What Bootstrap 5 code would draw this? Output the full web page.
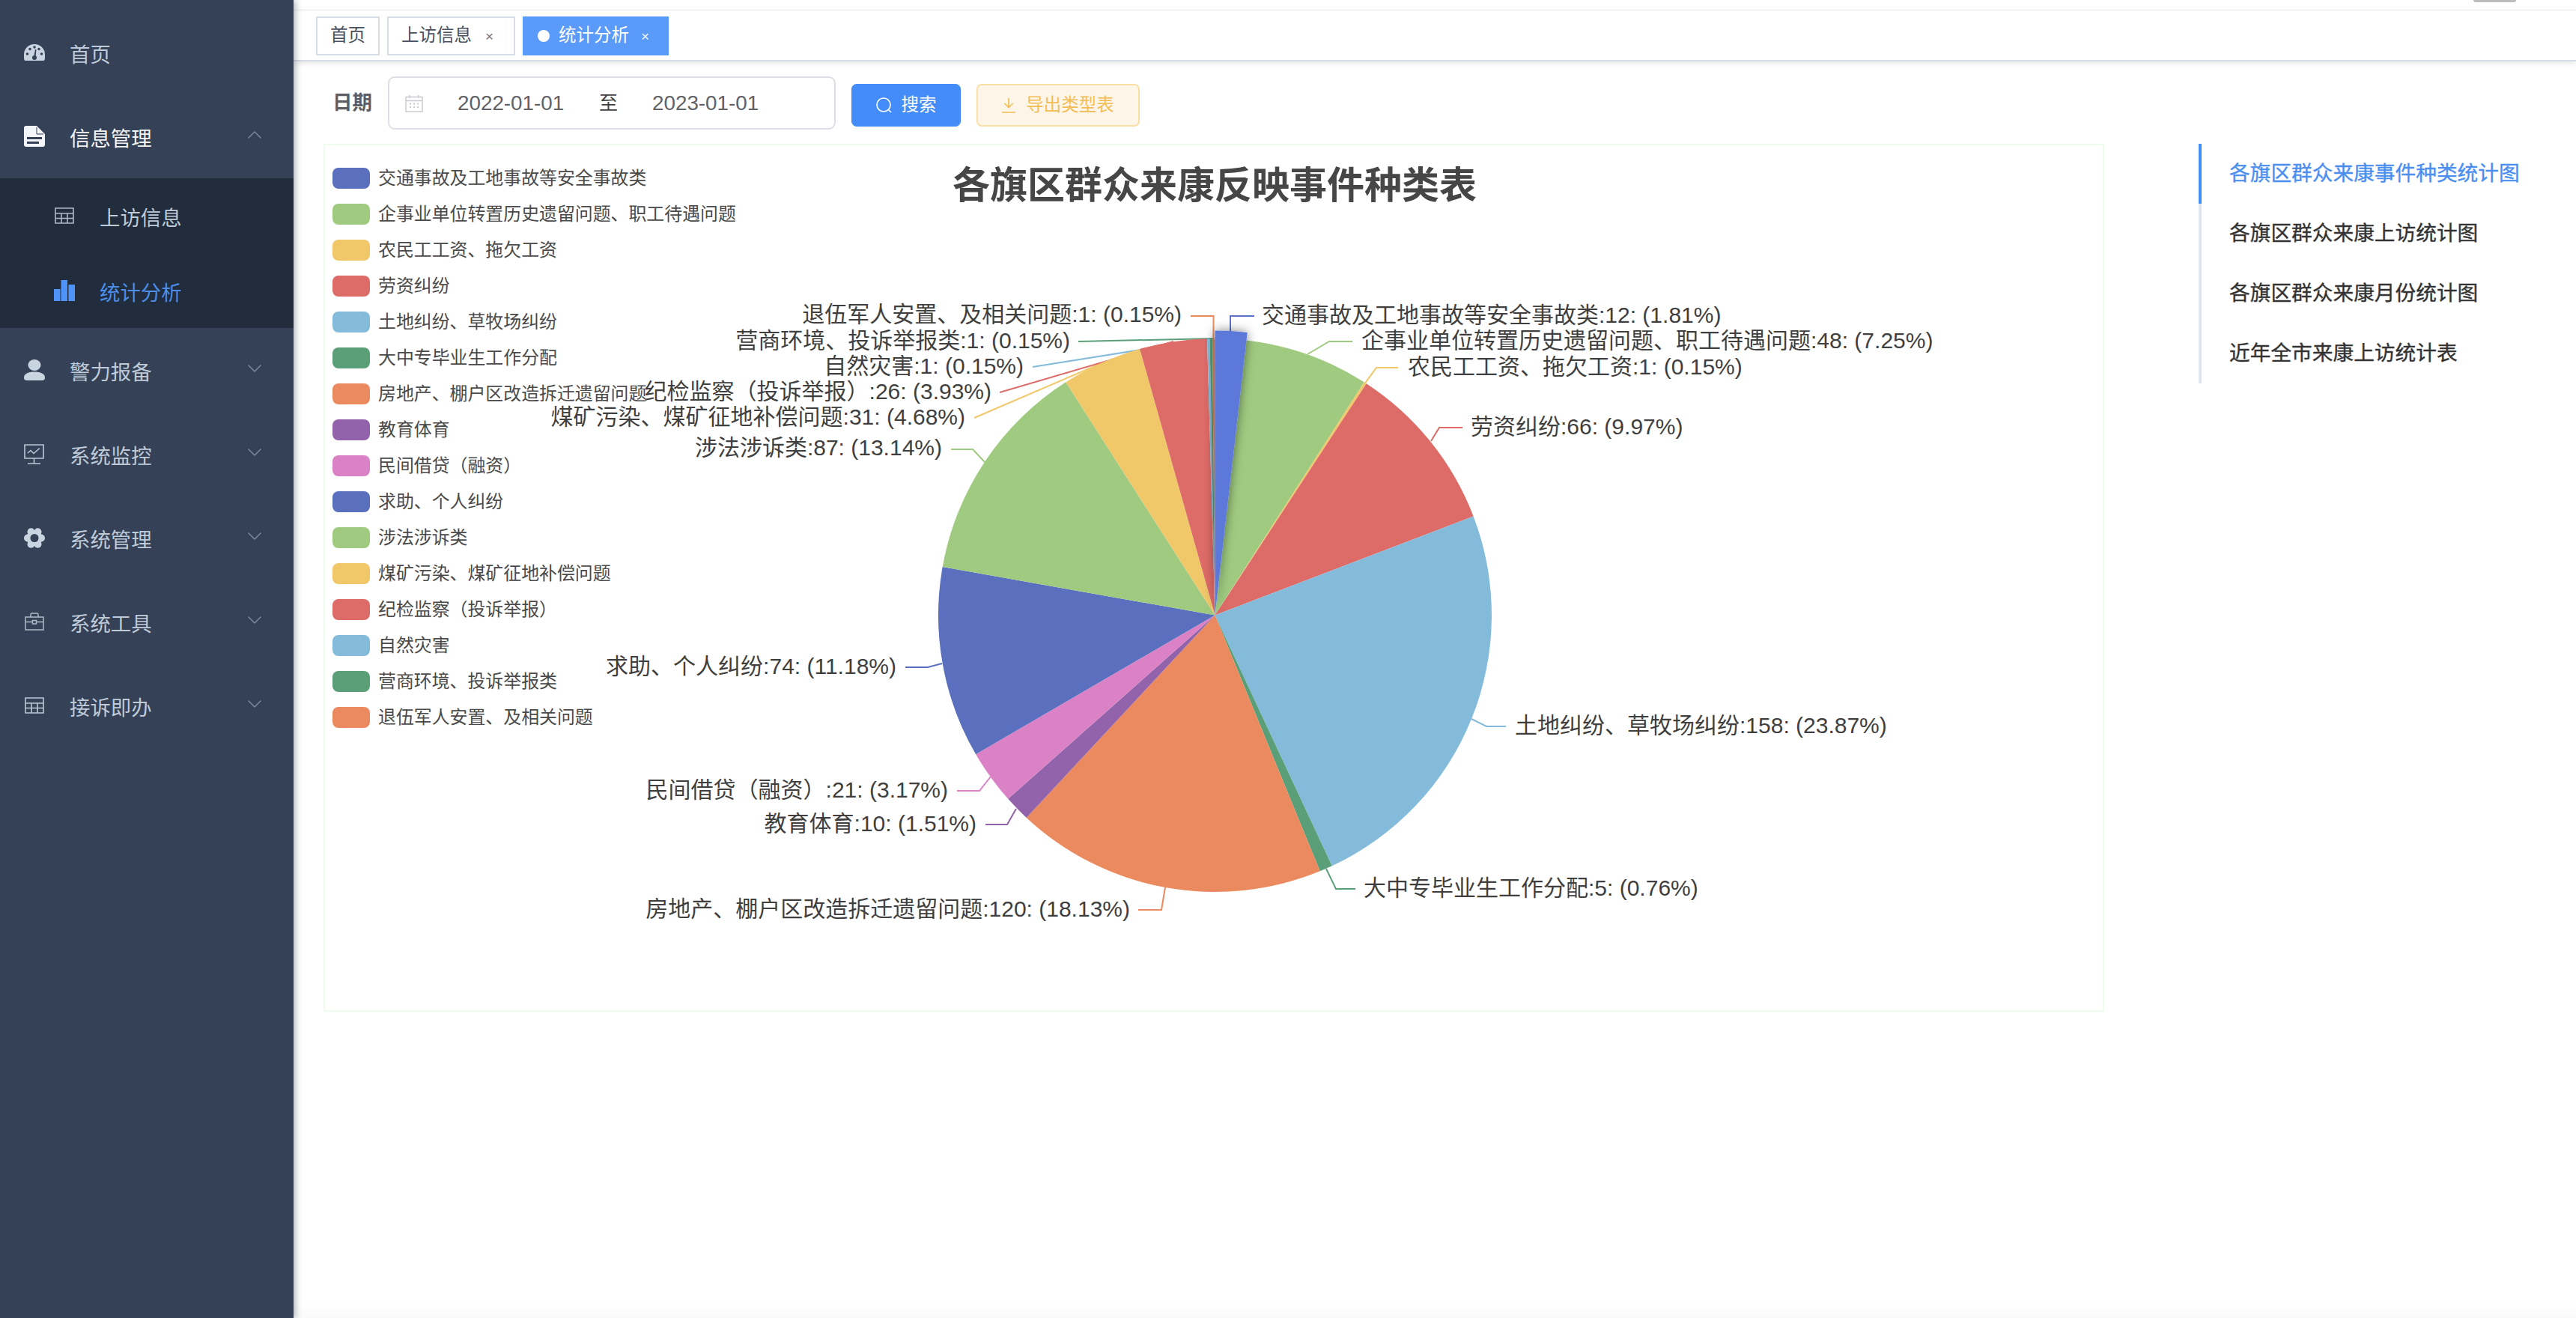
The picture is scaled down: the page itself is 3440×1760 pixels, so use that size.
<!DOCTYPE html>
<html lang="zh-CN">
<head>
<meta charset="utf-8">
<title>统计分析</title>
<link rel="stylesheet" href="https://cdn.jsdelivr.net/npm/bootstrap@5.3.0/dist/css/bootstrap.min.css">
<style>
html,body{height:100%;margin:0;background:#fff;overflow:hidden}
body{font-family:"Liberation Sans","Noto Sans CJK SC",sans-serif;color:#404040}
.app-shell{width:3440px;height:1760px}
/* sidebar */
.side-rail{width:392px;flex:0 0 392px;background:#354156;padding-top:14px;box-shadow:2px 0 9px rgba(0,21,41,.35);z-index:3}
.side-rail .nav-link{height:112px;padding:7px 43px 0 32px;color:#bfcbd9;font-size:27.4px;display:flex;align-items:center}
.side-rail .nav-link svg.mi{width:28px;margin-right:33px;flex:0 0 28px;margin-top:-7px;fill:#c8d4e0;color:#c8d4e0}
.side-rail .nav-link.is-open{color:#f4f4f5}
.side-rail .nav-link.is-open svg.mi{fill:#f4f5f8}
.side-rail .chev{width:18px;height:10px;margin-left:auto;margin-top:-11px;color:#808b9b}
.sub-pane{background:#212c3c}
.sub-pane .nav-link{height:100px;padding:7px 0 0 72px}
.sub-pane .nav-link svg.mi{color:#aeb8c6}
.sub-pane .nav-link.is-active{color:#4c8ee8}
.sub-pane .nav-link.is-active svg.mi{fill:#4f93f8}
/* top */
.work-area{min-width:0;box-shadow:inset 0 -26px 26px -26px rgba(0,0,0,.05)}
.top-strip{height:14px;border-bottom:1px solid #f1f1f3;padding-right:80px}
.avatar-foot{width:57px;height:3px;background:#bdbdbd;border-radius:0 0 6px 6px}
.tag-bar{height:68px;padding:8px 0 0 30px;gap:10px;background:#fff;border-bottom:2px solid #d8dce5;box-shadow:0 2px 8px rgba(0,0,0,.12);z-index:2}
.tag-chip{height:52px;border:2px solid #d8dce5;font-size:23.5px;color:#495060;padding:0 17px;background:#fff}
.tag-chip .cls{font-size:19px;margin:0 10px 0 18px;color:#777;line-height:1}
.tag-chip.on{background:#5a9af8;border-color:#5a9af8;color:#fff;padding:0 24px 0 18px}
.tag-chip.on .cls{color:#f2f6ff;margin:0 0 0 16px}
.tag-chip .dot-on{width:16px;height:16px;border-radius:50%;background:#fff;margin-right:12px}
/* filter */
.filter-row{padding:20px 0 0 52px;gap:21px}
.filter-label{font-size:26.5px;font-weight:700;color:#5c5e62;width:53px}
.range-box{width:598px;height:71px;border:2px solid #dcdfe6;border-radius:9px;padding-left:21px;font-size:27.8px;color:#606266}
.range-box .rb-val{width:143px;margin-left:46px}
.range-box .rb-to{width:25px;margin-left:46px;color:#404040;font-size:25px}
.act-btn{height:57px;border-radius:7px;font-size:23.5px;padding:0;display:flex;align-items:center;justify-content:center;margin-top:6px}
.act-search{width:146px;background:#448cf7;border-color:#448cf7;color:#fff;gap:13px}
.act-export{width:218px;background:#fdf6e8;border:2px solid #f9dfa6;color:#f3bd55;gap:14px}
/* chart */
.chart-row{padding:19px 0 0 40px}
.chart-canvas{width:2378px;height:1159px;box-shadow:inset 0 0 0 2px #effbef;flex:0 0 2378px}
.chart-canvas svg{display:block}
.chart-canvas text{font-family:"Liberation Sans","Noto Sans CJK SC",sans-serif}
.lbl{font-size:30px;fill:#3f3f3f;dominant-baseline:central}
.ttl{font-size:50px;font-weight:700;fill:#464646;dominant-baseline:central}
.legend-list{position:absolute;left:12px;top:32px;gap:20px;font-size:23.9px;color:#4a4a4a}
.legend-row{height:28px;line-height:28px;white-space:nowrap}
.legend-sw{width:50px;height:28px;border-radius:8px;margin-right:11px;flex:0 0 50px}
/* anchor */
.anchor-list{margin-left:126px;width:400px;height:320px;border-left:4px solid #e1e6ee}
.anchor-list .nav-link{height:80px;margin-left:-4px;border-left:4px solid transparent;padding:0 0 0 37px;display:flex;align-items:center;font-size:27.7px;font-weight:400;-webkit-text-stroke:.35px currentColor;color:#333;white-space:nowrap}
.anchor-list .nav-link.active{color:#4a8ff0;border-left-color:#448cf7}
</style>
</head>
<body>
<div class="app-shell d-flex">
  <aside class="side-rail">
    <nav class="nav flex-column">
      <a class="nav-link" href="#"><svg class="mi" viewBox="0 0 28 22" height="22"><path d="M2 22Q0 22 0 18V14A14 14 0 0 1 28 14V18Q28 22 26 22Z"/><g fill="#354156"><circle cx="4.5" cy="13" r="1.8"/><circle cx="8" cy="6.5" r="1.8"/><circle cx="14" cy="4" r="1.8"/><circle cx="23.5" cy="13" r="1.8"/><circle cx="20" cy="6.5" r="1.8"/><circle cx="14" cy="18" r="3"/></g><path d="M13 18 15 7 16.5 7.3 15.5 18Z" fill="#354156"/></svg>首页</a>
      <a class="nav-link is-open" href="#"><svg class="mi" viewBox="0 0 28 28" height="28"><path d="M3 0H17L28 11V25A3 3 0 0 1 25 28H3A3 3 0 0 1 0 25V3A3 3 0 0 1 3 0Z"/><path d="M17 2V11H26" fill="none" stroke="#354156" stroke-width="1"/><path d="M4 15H24V18H4ZM4 21H20V24H4Z" fill="#354156"/></svg>信息管理<svg class="chev" viewBox="0 0 18 10" fill="none" stroke="currentColor" stroke-width="1.4"><path d="M.5 9.500 9 1l8.500 8.500"/></svg></a>
      <div class="sub-pane">
        <a class="nav-link" href="#"><svg class="mi" viewBox="0 0 26 22" height="22" stroke="currentColor" stroke-width="1.6" style="fill:none"><path d="M1 1H25V21H1ZM1 8H25M1 14.500H25M9 8V21M17 8V21"/></svg>上访信息</a>
        <a class="nav-link is-active" href="#"><svg class="mi" viewBox="0 0 28 28" height="28"><path d="M0 12H8.500V28H0ZM9.500 0H18V28H9.500ZM19.500 6H28V28H19.500Z"/></svg>统计分析</a>
      </div>
      <a class="nav-link" href="#"><svg class="mi" viewBox="0 0 28 28" height="28"><ellipse cx="14" cy="7.500" rx="8.500" ry="7.500"/><path d="M0 24C0 19 6 16.500 14 16.500S28 19 28 24C28 27 26.500 28 24 28H4C1.500 28 0 27 0 24Z"/></svg>警力报备<svg class="chev" viewBox="0 0 18 10" fill="none" stroke="currentColor" stroke-width="1.400"><path d="M.5.500 9 9l8.500-8.500"/></svg></a>
      <a class="nav-link" href="#"><svg class="mi" viewBox="0 0 28 27" height="27" style="fill:none" stroke="#bcc8d6" stroke-width="1.600"><path d="M1 1H26V19H1ZM13.500 19V26M5 26H22"/><path d="M5 12 9 8.500 13 12.500 21 5.500" stroke-width="1.500"/></svg>系统监控<svg class="chev" viewBox="0 0 18 10" fill="none" stroke="currentColor" stroke-width="1.400"><path d="M.5.500 9 9l8.500-8.500"/></svg></a>
      <a class="nav-link" href="#"><svg class="mi" viewBox="0 0 28 27" height="27"><g><circle cx="14" cy="13.500" r="10.500"/><circle cx="23" cy="13.500" r="5"/><circle cx="5" cy="13.500" r="5"/><circle cx="18.500" cy="5.300" r="5"/><circle cx="9.500" cy="5.300" r="5"/><circle cx="18.500" cy="21.700" r="5"/><circle cx="9.500" cy="21.700" r="5"/></g><circle cx="14" cy="13.500" r="5.500" fill="#354156"/></svg>系统管理<svg class="chev" viewBox="0 0 18 10" fill="none" stroke="currentColor" stroke-width="1.400"><path d="M.5.500 9 9l8.500-8.500"/></svg></a>
      <a class="nav-link" href="#"><svg class="mi" viewBox="0 0 28 24" height="24" style="fill:none" stroke="#aeb9c8" stroke-width="1.500"><path d="M2 6H26V23H2ZM9 6V2.500A1.500 1.500 0 0 1 10.500 1H17.500A1.500 1.500 0 0 1 19 2.500V6M2 12.500H11.500M16.500 12.500H26"/><rect x="11.500" y="10.500" width="5" height="4.500"/></svg>系统工具<svg class="chev" viewBox="0 0 18 10" fill="none" stroke="currentColor" stroke-width="1.400"><path d="M.5.500 9 9l8.500-8.500"/></svg></a>
      <a class="nav-link" href="#"><svg class="mi" viewBox="0 0 28 22" height="22" style="fill:none" stroke="#bcc8d6" stroke-width="1.600"><path d="M2 1H26V21H2ZM2 8H26M2 14.500H26M10 8V21M18 8V21"/></svg>接诉即办<svg class="chev" viewBox="0 0 18 10" fill="none" stroke="currentColor" stroke-width="1.400"><path d="M.5.500 9 9l8.500-8.500"/></svg></a>
    </nav>
  </aside>

  <main class="work-area flex-grow-1 d-flex flex-column">
    <div class="top-strip d-flex justify-content-end flex-shrink-0"><div class="avatar-foot"></div></div>
    <div class="tag-bar d-flex flex-shrink-0">
      <a class="tag-chip d-flex align-items-center text-decoration-none" href="#">首页</a>
      <a class="tag-chip d-flex align-items-center text-decoration-none" href="#">上访信息<span class="cls">×</span></a>
      <a class="tag-chip on d-flex align-items-center text-decoration-none" href="#"><span class="dot-on"></span>统计分析<span class="cls">×</span></a>
    </div>

    <div class="filter-row d-flex align-items-center flex-shrink-0">
      <label class="filter-label">日期</label>
      <div class="range-box d-flex align-items-center">
        <svg width="24" height="24" viewBox="0 0 24 24" fill="none" stroke="#c9cbd0" stroke-width="1.500"><path d="M1 3.500H23V23H1ZM1 8.500H23M6 1V5M18 1V5"/><path d="M6 12.500H8M11 12.500H13M16 12.500H18M6 17H8M11 17H13M16 17H18" stroke-width="1.800"/></svg>
        <span class="rb-val">2022-01-01</span><span class="rb-to">至</span><span class="rb-val">2023-01-01</span>
      </div>
      <button type="button" class="btn btn-primary act-btn act-search"><svg width="21" height="21" viewBox="0 0 21 21" fill="none" stroke="#fff" stroke-width="1.600"><circle cx="10" cy="10" r="9"/><path d="M16.500 16.500 20 20"/></svg>搜索</button>
      <button type="button" class="btn act-btn act-export"><svg width="18" height="21" viewBox="0 0 18 21" fill="none" stroke="#f3bd55" stroke-width="1.700"><path d="M9 1V13M3.500 8 9 13.500 14.500 8M0 20H18"/></svg>导出类型表</button>
    </div>

    <div class="chart-row d-flex align-items-start flex-shrink-0">
      <div class="chart-canvas position-relative">
        <svg id="pie" width="2378" height="1159" viewBox="432 192 2378 1159">
          <text class="ttl" x="1622" y="248" text-anchor="middle">各旗区群众来康反映事件种类表</text>
          <g fill="none" stroke-width="2">
            <path stroke="#5b72c6" d="M1675 422H1643V444"/>
            <path stroke="#9fca80" d="M1806 456H1775L1746 473"/>
            <path stroke="#f0c769" d="M1867 491H1838L1822 513"/>
            <path stroke="#dd6b67" d="M1953 571H1922L1911 589"/>
            <path stroke="#84bbdb" d="M2011 970H1985L1965 960"/>
            <path stroke="#5a9f78" d="M1810 1187H1784L1771 1160"/>
            <path stroke="#ea8a5e" d="M1520 1215H1551L1556 1185"/>
            <path stroke="#9263ab" d="M1316 1101H1345L1357 1080"/>
            <path stroke="#da82c5" d="M1278 1056H1308L1323 1037"/>
            <path stroke="#5a70bf" d="M1209 891H1239L1258 886"/>
            <path stroke="#9fca80" d="M1270 600H1299L1315 617"/>
            <path stroke="#f0c769" d="M1301 558L1471 485"/>
            <path stroke="#dd6b67" d="M1335 524L1567 456"/>
            <path stroke="#84bbdb" d="M1379 490L1618 452"/>
            <path stroke="#5a9f78" d="M1440 456L1620 452"/>
            <path stroke="#ea8a5e" d="M1590 422H1620.500V453"/>
          </g>
          <g id="slices"></g>
          <g text-anchor="start" transform="translate(0,-2)">
            <text class="lbl" x="1685" y="422">交通事故及工地事故等安全事故类:12: (1.81%)</text>
            <text class="lbl" x="1818" y="456">企事业单位转置历史遗留问题、职工待遇问题:48: (7.25%)</text>
            <text class="lbl" x="1880" y="491">农民工工资、拖欠工资:1: (0.15%)</text>
            <text class="lbl" x="1964" y="571">劳资纠纷:66: (9.97%)</text>
            <text class="lbl" x="2023" y="970">土地纠纷、草牧场纠纷:158: (23.87%)</text>
            <text class="lbl" x="1821" y="1187">大中专毕业生工作分配:5: (0.76%)</text>
          </g>
          <g text-anchor="end" transform="translate(0,-2)">
            <text class="lbl" x="1509" y="1215">房地产、棚户区改造拆迁遗留问题:120: (18.13%)</text>
            <text class="lbl" x="1304" y="1101">教育体育:10: (1.51%)</text>
            <text class="lbl" x="1266" y="1056">民间借贷（融资）:21: (3.17%)</text>
            <text class="lbl" x="1197" y="891">求助、个人纠纷:74: (11.18%)</text>
            <text class="lbl" x="1258" y="599">涉法涉诉类:87: (13.14%)</text>
            <text class="lbl" x="1289" y="558">煤矿污染、煤矿征地补偿问题:31: (4.68%)</text>
            <text class="lbl" x="1324" y="524">纪检监察（投诉举报）:26: (3.93%)</text>
            <text class="lbl" x="1367" y="490">自然灾害:1: (0.15%)</text>
            <text class="lbl" x="1429" y="456">营商环境、投诉举报类:1: (0.15%)</text>
            <text class="lbl" x="1578" y="421">退伍军人安置、及相关问题:1: (0.15%)</text>
          </g>
          <defs><filter id="lift" x="-60%" y="-20%" width="220%" height="140%"><feDropShadow dx="0" dy="0" stdDeviation="7" flood-color="#000" flood-opacity=".5"/></filter></defs>
        </svg>
        <div class="legend-list d-flex flex-column" id="legend"></div>
      </div>
      <nav class="nav flex-column anchor-list flex-shrink-0">
        <a class="nav-link active" href="#">各旗区群众来康事件种类统计图</a>
        <a class="nav-link" href="#">各旗区群众来康上访统计图</a>
        <a class="nav-link" href="#">各旗区群众来康月份统计图</a>
        <a class="nav-link" href="#">近年全市来康上访统计表</a>
      </nav>
    </div>
  </main>
</div>
<script src="https://cdn.jsdelivr.net/npm/bootstrap@5.3.0/dist/js/bootstrap.bundle.min.js"></script>
<script>
(function(){
  var palette=['#5a70bf','#9fca80','#f0c769','#dd6b67','#84bbdb','#5a9f78','#ea8a5e','#9263ab','#da82c5'];
  var data=[['交通事故及工地事故等安全事故类',12],['企事业单位转置历史遗留问题、职工待遇问题',48],['农民工工资、拖欠工资',1],['劳资纠纷',66],['土地纠纷、草牧场纠纷',158],['大中专毕业生工作分配',5],['房地产、棚户区改造拆迁遗留问题',120],['教育体育',10],['民间借贷（融资）',21],['求助、个人纠纷',74],['涉法涉诉类',87],['煤矿污染、煤矿征地补偿问题',31],['纪检监察（投诉举报）',26],['自然灾害',1],['营商环境、投诉举报类',1],['退伍军人安置、及相关问题',1]];
  var total=data.reduce(function(s,d){return s+d[1]},0),cx=1622.5,cy=821.5,a=0;
  var svgNS='http://www.w3.org/2000/svg',host=document.getElementById('slices'),legend=document.getElementById('legend'),first=null;
  data.forEach(function(d,i){
    var sweep=d[1]/total*2*Math.PI,r=i===0?380:369.5,b=a+sweep;
    var p=document.createElementNS(svgNS,'path');
    p.setAttribute('d','M'+cx+' '+cy+'L'+(cx+r*Math.sin(a)).toFixed(2)+' '+(cy-r*Math.cos(a)).toFixed(2)+'A'+r+' '+r+' 0 '+(sweep>Math.PI?1:0)+' 1 '+(cx+r*Math.sin(b)).toFixed(2)+' '+(cy-r*Math.cos(b)).toFixed(2)+'Z');
    p.setAttribute('fill',i===0?'#5c78d8':palette[i%9]);
    if(i===0){p.setAttribute('filter','url(#lift)');first=p}else{host.appendChild(p)}
    a=b;
    var row=document.createElement('div');row.className='legend-row d-flex align-items-center';
    var sw=document.createElement('span');sw.className='legend-sw';sw.style.background=palette[i%9];
    row.appendChild(sw);row.appendChild(document.createTextNode(d[0]));legend.appendChild(row);
  });
  host.appendChild(first);
})();
</script>
</body>
</html>
